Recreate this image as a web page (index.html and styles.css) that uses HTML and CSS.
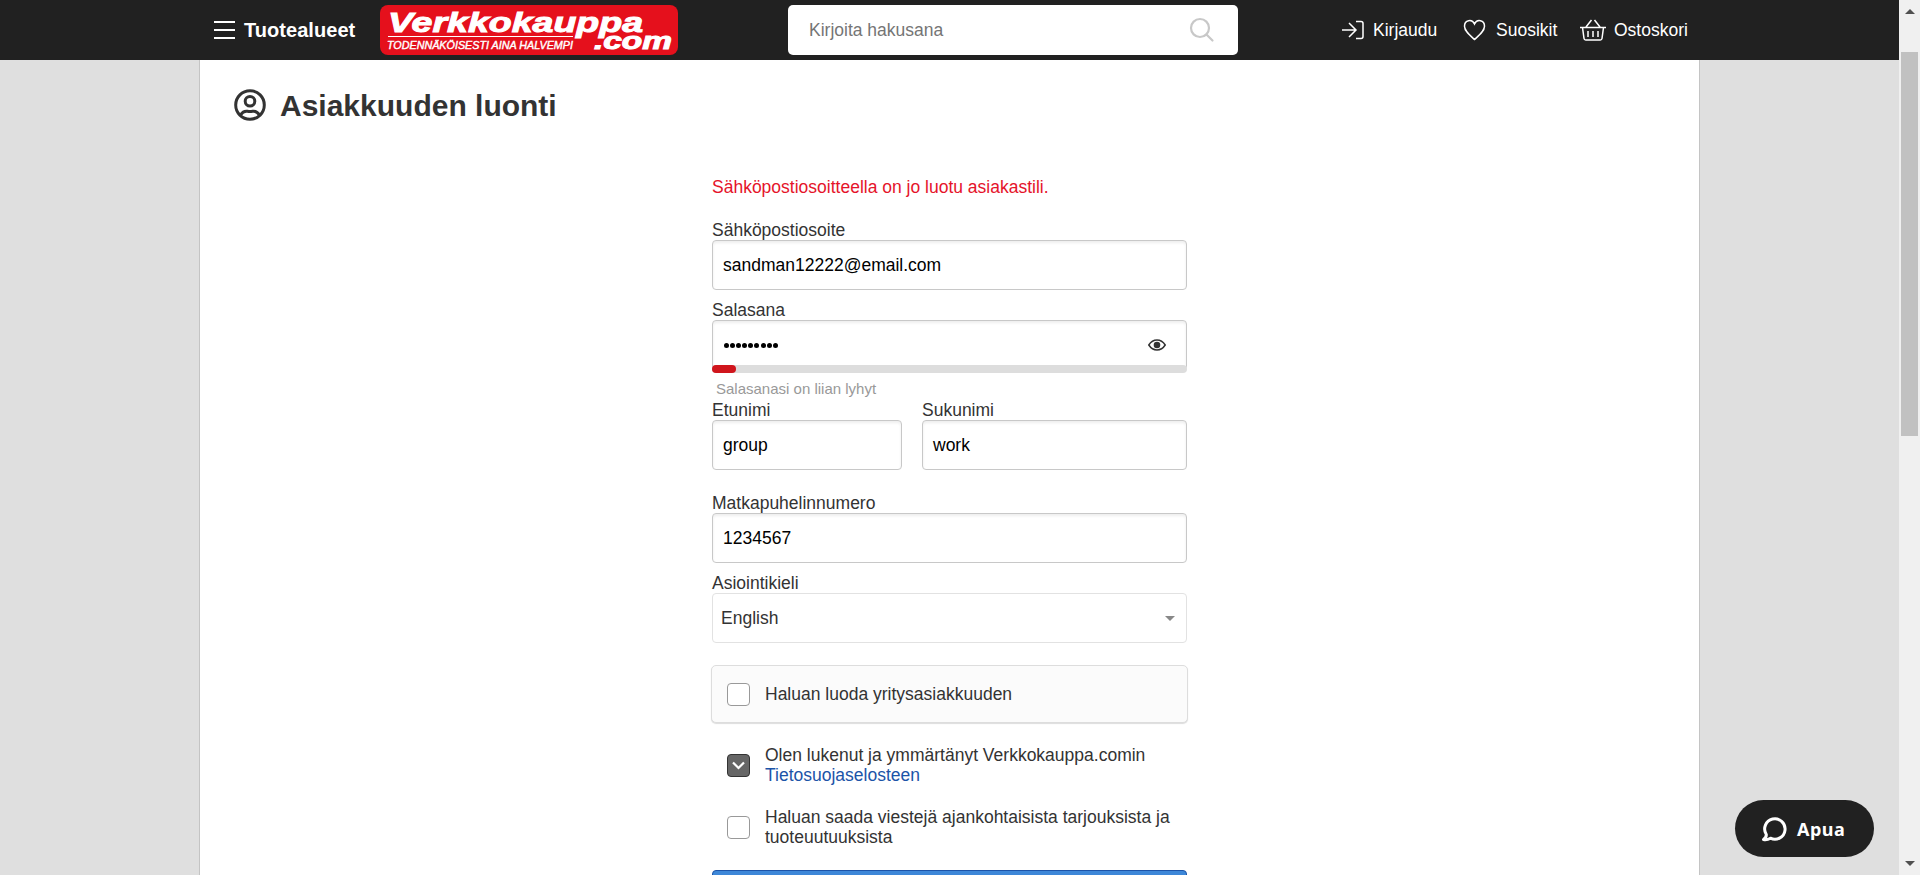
FILE: index.html
```html
<!DOCTYPE html>
<html lang="fi">
<head>
<meta charset="utf-8">
<title>Asiakkuuden luonti</title>
<link rel="stylesheet" href="styles.css">
</head>
<body>
<div class="window">
  <div class="view">
    <header class="header">
      <button class="menu"><svg width="22" height="20" viewBox="0 0 22 20"><path d="M0 2h21M0 10h21M0 18h21"/></svg><span>Tuotealueet</span></button>
      <a class="logo"><svg width="298" height="50" viewBox="0 0 298 50">
        <rect width="298" height="50" rx="8"/>
        <g class="logo-text">
          <text class="logo-name" x="8" y="27" textLength="255" lengthAdjust="spacingAndGlyphs">Verkkokauppa</text>
          <text class="logo-com" x="214" y="44" textLength="78" lengthAdjust="spacingAndGlyphs">.com</text>
          <text class="logo-tag" x="7" y="44" textLength="186" lengthAdjust="spacingAndGlyphs">TODENNÄKÖISESTI AINA HALVEMPI</text>
        </g>
        <path class="logo-line" d="M8 31.500h185"/>
      </svg></a>
      <div class="search"><span>Kirjoita hakusana</span><svg width="26" height="26" viewBox="0 0 26 26"><circle cx="11" cy="11" r="9"/><path d="M17.500 17.500l6 6"/></svg></div>
      <nav class="links">
        <a class="login"><svg width="22" height="20" viewBox="0 0 22 20"><path d="M0 10h14M7 3l7 7l-7 7M14 1.500h5a2 2 0 0 1 2 2v13a2 2 0 0 1-2 2H14"/></svg><span>Kirjaudu</span></a>
        <a class="fav"><svg width="24" height="22" viewBox="0 0 24 22"><path d="M11.500 20.500C6.500 16 1.500 12 1.500 7.200C1.500 1 9-.5 11.500 5c2.500-5.500 10-4 10 2.200C21.500 12 16.500 16 11.500 20.500z"/></svg><span>Suosikit</span></a>
        <a class="cart"><svg width="26" height="22" viewBox="0 0 26 22"><path d="M0 8.500h26M2.500 8.500l1.500 11q.2 1.500 1.700 1.500h14.600q1.500 0 1.700-1.500l1.500-11M6 8l5.500-7M20 8L14.500 1M8 12v6M13 12v6M18 12v6"/></svg><span>Ostoskori</span></a>
      </nav>
    </header>
    <main class="page">
      <h1 class="title"><svg width="32" height="32" viewBox="0 0 32 32"><circle cx="16" cy="16" r="14.300"/><circle cx="16" cy="12.300" r="4.800"/><path d="M6.500 26q3-4.500 7-3.700q2.500.6 5 0q4-.8 7 3.700"/></svg><span>Asiakkuuden luonti</span></h1>
      <form class="form">
        <p class="error">Sähköpostiosoitteella on jo luotu asiakastili.</p>
        <label class="label">Sähköpostiosoite</label>
        <div class="input">sandman12222@email.com</div>
        <label class="label gap">Salasana</label>
        <div class="password">
          <div class="input"><span class="dots"><i></i><i></i><i></i><i></i><i></i><i></i><i></i><i></i><i></i></span>
            <svg class="eye" width="18" height="12" viewBox="0 0 18 12"><path d="M.8 6Q4 1 9 1t8.200 5Q14 11 9 11T.8 6z"/><circle cx="9" cy="6" r="3.300"/></svg></div>
          <div class="meter"><div class="level"></div></div>
        </div>
        <p class="hint">Salasanasi on liian lyhyt</p>
        <div class="names">
          <div><label class="label">Etunimi</label><div class="input">group</div></div>
          <div><label class="label">Sukunimi</label><div class="input">work</div></div>
        </div>
        <label class="label">Matkapuhelinnumero</label>
        <div class="input">1234567</div>
        <label class="label gap">Asiointikieli</label>
        <div class="select"><span>English</span><i class="caret"></i></div>
        <div class="option panel"><span class="box"></span><span>Haluan luoda yritysasiakkuuden</span></div>
        <div class="option terms"><span class="box checked"><svg width="13" height="10" viewBox="0 0 13 10"><path d="M1 2.500l5.500 5.500l5.500-5.500"/></svg></span><span>Olen lukenut ja ymmärtänyt Verkkokauppa.comin<br><a>Tietosuojaselosteen</a></span></div>
        <div class="option news"><span class="box"></span><span>Haluan saada viestejä ajankohtaisista tarjouksista ja<br>tuoteuutuuksista</span></div>
        <div class="submit"></div>
      </form>
    </main>
  </div>
  <div class="scrollbar"><i class="up"></i><div class="thumb"></div><i class="down"></i></div>
  <button class="help"><svg width="26" height="26" viewBox="0 0 26 26"><path d="M5.300 18.500A10.200 10.200 0 1 1 9.500 22.200Q6 24.200 2.500 23.500Q5.500 21.500 5.300 18.500z"/></svg><span>Apua</span></button>
</div>
</body>
</html>
```
FILE: styles.css
```css
* { box-sizing: border-box; }
body { margin: 0; font: 17.5px/20px "Liberation Sans", Arial, sans-serif; color: #333; }
svg { display: block; flex: none; fill: none; stroke: currentColor; }
button { border: 0; padding: 0; background: none; color: inherit; font: inherit; }
h1, p { margin: 0; }
.window { position: relative; display: flex; height: 875px; overflow: hidden; }
.view { flex: 1; height: 875px; background: #dfdfdf; overflow: hidden; }
.header { display: flex; align-items: center; height: 60px; background: #212121; color: #fff; padding-left: 214px; }
.menu { display: flex; align-items: center; gap: 8px; width: 166px; font-size: 20px; line-height: 22px; font-weight: 700; letter-spacing: 0.05px; }
.menu svg { stroke-width: 2.2; }
.logo svg { stroke: none; }
.logo rect { fill: #e5101c; }
.logo-text { fill: #fff; stroke: #fff; stroke-width: 1; font-weight: 700; font-style: italic; }
.logo-name { font-size: 28px; }
.logo-com { font-size: 24px; }
.logo-tag { font-size: 10.3px; font-weight: 400; stroke-width: 0.4; }
.logo-line { stroke: #fff; }
.search { display: flex; align-items: center; justify-content: space-between; width: 450px; height: 50px; margin-left: 110px; padding: 0 23px 0 21px; border-radius: 5px; background: #fff; color: #757575; }
.search svg { stroke: #c8c8c8; stroke-width: 2.2; stroke-linecap: round; }
.links { display: flex; margin-left: 104px; }
.links a { display: flex; align-items: center; }
.links svg { stroke-width: 1.5; }
.login { gap: 9px; width: 121px; }
.fav { gap: 9px; width: 117px; }
.cart { gap: 8px; }
.page { width: 1501px; height: 815px; margin-left: 199px; padding: 29px 0 0 33px; border: solid #c4c4c4; border-width: 0 1px; background: #fff; }
.title { display: flex; align-items: center; gap: 14px; height: 32px; margin-left: 1px; font-size: 30px; line-height: 32px; }
.title span { padding-top: 2px; }
.title svg { stroke-width: 3; }
.form { width: 475px; margin: 56px 0 0 479px; }
.error { height: 43px; color: #e5132a; }
.label { display: block; height: 20px; }
.gap { margin-top: 10px; }
.input { display: flex; align-items: center; height: 50px; padding: 0 20px 0 10px; border: 1px solid #c8c8c8; border-radius: 4px; box-shadow: inset 0 2px 3px #eee; color: #000; }
.password { height: 58px; }
.dots { display: flex; gap: 1.1px; flex: 1; padding-left: 1px; }
.dots i { width: 5px; height: 5px; border-radius: 50%; background: #000; }
.eye { color: #333; stroke-width: 1.5; }
.eye circle { fill: #333; stroke: none; }
.meter { position: relative; height: 8px; margin-top: -5px; border-radius: 4px; background: #ddd; }
.level { width: 24px; height: 8px; border-radius: 4px; background: #d0151c; }
.hint { height: 22px; padding-left: 4px; font-size: 15px; line-height: 21px; color: #999; }
.names { display: grid; grid-template-columns: 190px 265px; gap: 20px; margin-bottom: 23px; }
.select { display: flex; align-items: center; justify-content: space-between; height: 50px; padding: 0 11px 0 8px; border: 1px solid #e2e2e2; border-radius: 4px; }
.caret { border: 5px solid transparent; border-top-color: #888; border-bottom: 0; }
.option { display: flex; align-items: center; gap: 15px; padding-left: 15px; }
.panel { height: 58px; margin: 22px -1px 0; border: 1px solid #ddd; border-radius: 5px; background: #fbfbfb; box-shadow: 0 1px 1px #ddd; }
.terms, .news { margin-top: 22px; }
.option a { color: #1c54a8; }
.box { display: flex; align-items: center; justify-content: center; flex: none; width: 23px; height: 23px; border: 1px solid #999; border-radius: 4px; background: #fff; }
.checked { border-color: #333; background: #666; color: #fff; }
.checked svg { stroke-width: 2.2; }
.submit { height: 50px; margin-top: 23px; border: 1px solid #1c54a8; border-radius: 4px; background: #3d87d8; }
.scrollbar { display: flex; flex-direction: column; align-items: center; width: 21px; height: 875px; padding: 9px 0; background: #f0f0f0; }
.up, .down { border: 5px solid transparent; }
.up { border-top: 0; border-bottom-color: #505050; }
.down { margin-top: auto; border-bottom: 0; border-top-color: #505050; }
.thumb { width: 17px; height: 384px; margin-top: 38px; background: #c1c1c1; }
.help { position: absolute; left: 1735px; top: 800px; display: flex; align-items: center; gap: 10px; width: 139px; height: 57px; padding-left: 26px; border-radius: 29px; background: #212121; color: #fff; font: 700 18px/24px "Noto Sans", sans-serif; letter-spacing: 0.5px; }
.help svg { stroke-width: 3; stroke-linejoin: round; }
```
